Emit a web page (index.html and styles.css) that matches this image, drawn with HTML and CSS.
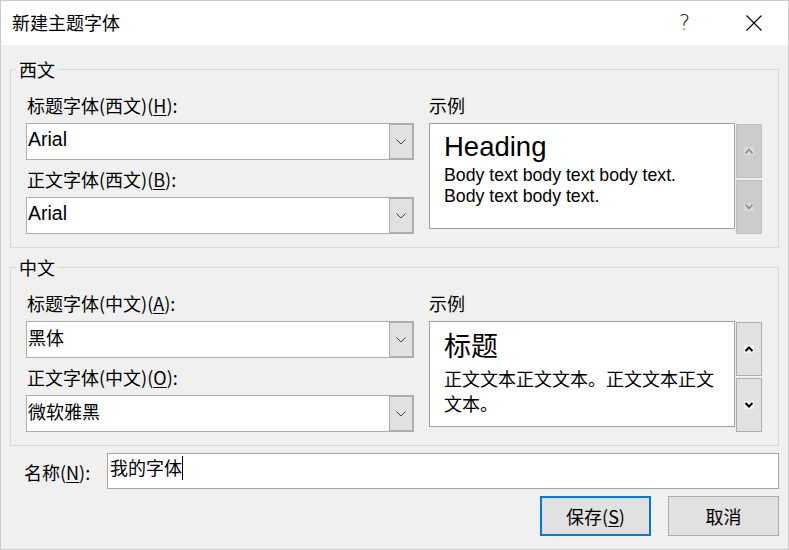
FILE: index.html
```html
<!DOCTYPE html>
<html lang="zh-CN">
<head>
<meta charset="utf-8">
<title>新建主题字体</title>
<link rel="stylesheet" href="styles.css">
</head>
<body>
<div class="window">
  <header class="titlebar">
    <div class="title">新建主题字体</div>
    <div class="tb-btn help">?</div>
    <div class="tb-btn close">
      <svg width="16" height="16" viewBox="0 0 16 16"><path d="M0.5 0.5 L15.5 15.5 M15.5 0.5 L0.5 15.5" stroke="#000" stroke-width="1.1" fill="none"/></svg>
    </div>
  </header>
  <main class="content">
    <fieldset class="group">
      <legend>西文</legend>
      <div class="cols">
        <div class="col">
          <div class="lbl indent">标题字体(西文)(<u>H</u>):</div>
          <div class="combo">
            <span class="value latin">Arial</span>
            <span class="drop"><svg width="10" height="6" viewBox="0 0 10 6"><path d="M0.5 0.5 L5 5 L9.5 0.5" stroke="#404040" fill="none" stroke-width="1"/></svg></span>
          </div>
          <div class="lbl indent second">正文字体(西文)(<u>B</u>):</div>
          <div class="combo">
            <span class="value latin">Arial</span>
            <span class="drop"><svg width="10" height="6" viewBox="0 0 10 6"><path d="M0.5 0.5 L5 5 L9.5 0.5" stroke="#404040" fill="none" stroke-width="1"/></svg></span>
          </div>
        </div>
        <div class="col">
          <div class="lbl">示例</div>
          <div class="preview-row">
            <div class="preview">
              <div class="pv-head latin">Heading</div>
              <div class="pv-body latin">Body text body text body text.<br>Body text body text.</div>
            </div>
            <div class="spin disabled">
              <div class="spin-btn"><svg width="10" height="8" viewBox="0 0 10 8"><rect width="10" height="8" class="arrow-bg"/><path d="M1.5 6.5 L5 2.5 L8.5 6.5" class="arrow" fill="none"/></svg></div>
              <div class="spin-btn"><svg width="10" height="8" viewBox="0 0 10 8"><rect width="10" height="8" class="arrow-bg"/><path d="M1.5 1.5 L5 5.5 L8.5 1.5" class="arrow" fill="none"/></svg></div>
            </div>
          </div>
        </div>
      </div>
    </fieldset>

    <fieldset class="group group2">
      <legend>中文</legend>
      <div class="cols">
        <div class="col">
          <div class="lbl indent">标题字体(中文)(<u>A</u>):</div>
          <div class="combo">
            <span class="value cjk">黑体</span>
            <span class="drop"><svg width="10" height="6" viewBox="0 0 10 6"><path d="M0.5 0.5 L5 5 L9.5 0.5" stroke="#404040" fill="none" stroke-width="1"/></svg></span>
          </div>
          <div class="lbl indent second">正文字体(中文)(<u>O</u>):</div>
          <div class="combo">
            <span class="value cjk">微软雅黑</span>
            <span class="drop"><svg width="10" height="6" viewBox="0 0 10 6"><path d="M0.5 0.5 L5 5 L9.5 0.5" stroke="#404040" fill="none" stroke-width="1"/></svg></span>
          </div>
        </div>
        <div class="col">
          <div class="lbl">示例</div>
          <div class="preview-row">
            <div class="preview">
              <div class="pv-head cjk-head">标题</div>
              <div class="pv-body cjk-body">正文文本正文文本。正文文本正文文本。</div>
            </div>
            <div class="spin">
              <div class="spin-btn"><svg width="10" height="8" viewBox="0 0 10 8"><rect width="10" height="8" class="arrow-bg"/><path d="M1.5 6 L5 2.5 L8.5 6" class="arrow" fill="none"/></svg></div>
              <div class="spin-btn"><svg width="10" height="8" viewBox="0 0 10 8"><rect width="10" height="8" class="arrow-bg"/><path d="M1.5 2 L5 5.5 L8.5 2" class="arrow" fill="none"/></svg></div>
            </div>
          </div>
        </div>
      </div>
    </fieldset>

    <div class="name-row">
      <div class="name-lbl">名称(<u>N</u>):</div>
      <div class="name-input"><span class="name-text">我的字体</span><span class="caret"></span></div>
    </div>

    <div class="actions">
      <button class="btn primary">保存(<u>S</u>)</button>
      <button class="btn">取消</button>
    </div>
  </main>
</div>
</body>
</html>
```

FILE: styles.css
```css
* { box-sizing: border-box; }
html, body { margin: 0; padding: 0; }
body {
  width: 789px;
  height: 550px;
  overflow: hidden;
  background: #f0f0f0;
  font-family: "Noto Sans CJK SC", "Noto Sans", sans-serif;
  font-size: 18px;
  color: #000;
}
u { text-decoration-thickness: 1px; text-underline-offset: 2px; }

.window {
  width: 789px;
  height: 550px;
  border: 1px solid #cccccc;
  background: #f0f0f0;
  display: flex;
  flex-direction: column;
}

.titlebar {
  flex: none;
  height: 44px;
  background: #ffffff;
  display: flex;
}
.title {
  flex: 1;
  padding-left: 11px;
  font-size: 18px;
  line-height: 42px;
}
.tb-btn {
  width: 69px;
  display: flex;
  align-items: center;
  justify-content: center;
}
.help {
  font-family: "DejaVu Sans", sans-serif;
  font-weight: 300;
  font-size: 21px;
  line-height: 42px;
  color: #111;
}

.content {
  flex: 1;
  padding: 0 9px;
}

.group {
  margin: 14px 0 0;
  padding: 13px 0;
  border: 1px solid #d9d9d9;
  min-width: 0;
}
.group2 { margin-top: 9px; }
.group legend {
  margin-left: 5px;
  padding: 0 3px;
  font-size: 18px;
  line-height: 21px;
}

.cols {
  display: grid;
  grid-template-columns: 388px 333px;
  column-gap: 15px;
  padding: 0 16px 0 15px;
}
.col { display: flex; flex-direction: column; }

.lbl {
  font-size: 18px;
  line-height: 24px;
  margin-bottom: 6px;
}
.lbl.indent { padding-left: 1px; }
.lbl.second { margin-top: 7px; }

.combo {
  height: 37px;
  border: 1px solid #adadad;
  background: #ffffff;
  display: flex;
  align-items: flex-start;
}
.value {
  flex: 1;
  padding-left: 1px;
  white-space: nowrap;
}
.value.latin {
  font-family: "Liberation Sans", Arial, sans-serif;
  font-size: 19.5px;
  line-height: 30px;
}
.value.cjk {
  font-size: 18px;
  line-height: 31px;
}
.drop {
  width: 24px;
  height: 35px;
  border: 1px solid #adadad;
  background: #e1e1e1;
  display: flex;
  align-items: center;
  justify-content: center;
}

.preview-row {
  display: flex;
  align-items: flex-start;
  gap: 1px;
}
.preview {
  width: 306px;
  height: 106px;
  border: 1px solid #a0a0a0;
  background: #ffffff;
  padding: 8px 14px 0 14px;
}
.pv-head.latin {
  font-family: "Liberation Sans", Arial, sans-serif;
  font-size: 27.5px;
  line-height: 30px;
}
.pv-body.latin {
  font-family: "Liberation Sans", Arial, sans-serif;
  font-size: 17.7px;
  line-height: 21px;
  margin-top: 3px;
  white-space: nowrap;
}
.cjk-head {
  font-size: 27px;
  line-height: 30px;
}
.cjk-body {
  font-size: 18px;
  line-height: 25px;
  margin-top: 6px;
}

.spin {
  width: 26px;
  margin-top: 1px;
  display: flex;
  flex-direction: column;
  gap: 2px;
}
.spin-btn {
  height: 54px;
  border: 1px solid #adadad;
  background: #e1e1e1;
  display: flex;
  align-items: center;
  justify-content: center;
}
.spin .arrow-bg { fill: #f2f2f2; }
.spin .arrow { stroke: #000000; stroke-width: 2; }
.spin.disabled .spin-btn { background: #cccccc; border-color: #bfbfbf; }
.spin.disabled .arrow-bg { fill: #d9d9d9; }
.spin.disabled .arrow { stroke: #8c8c8c; stroke-width: 1.5; }

.name-row {
  margin-top: 7px;
  display: flex;
  align-items: flex-start;
}
.name-lbl {
  flex: 0 0 97px;
  padding-left: 14px;
  margin-top: 7px;
  font-size: 18px;
  line-height: 24px;
  white-space: nowrap;
}
.name-input {
  flex: 1;
  height: 36px;
  border: 1px solid #a6a6a6;
  background: #ffffff;
  padding-left: 2px;
  display: flex;
  align-items: flex-start;
}
.name-text {
  font-size: 18px;
  line-height: 26px;
}
.caret {
  width: 1px;
  height: 24px;
  margin-top: 2px;
  background: #000000;
}

.actions {
  margin-top: 7px;
  display: flex;
  justify-content: flex-end;
  gap: 17px;
}
.btn {
  width: 111px;
  height: 40px;
  margin: 0;
  padding: 0;
  border: 1px solid #adadad;
  background: #e1e1e1;
  font-family: "Noto Sans CJK SC", "Noto Sans", sans-serif;
  font-size: 18px;
  line-height: 24px;
  color: #000;
}
.btn.primary { border: 2px solid #0078d7; }
```
